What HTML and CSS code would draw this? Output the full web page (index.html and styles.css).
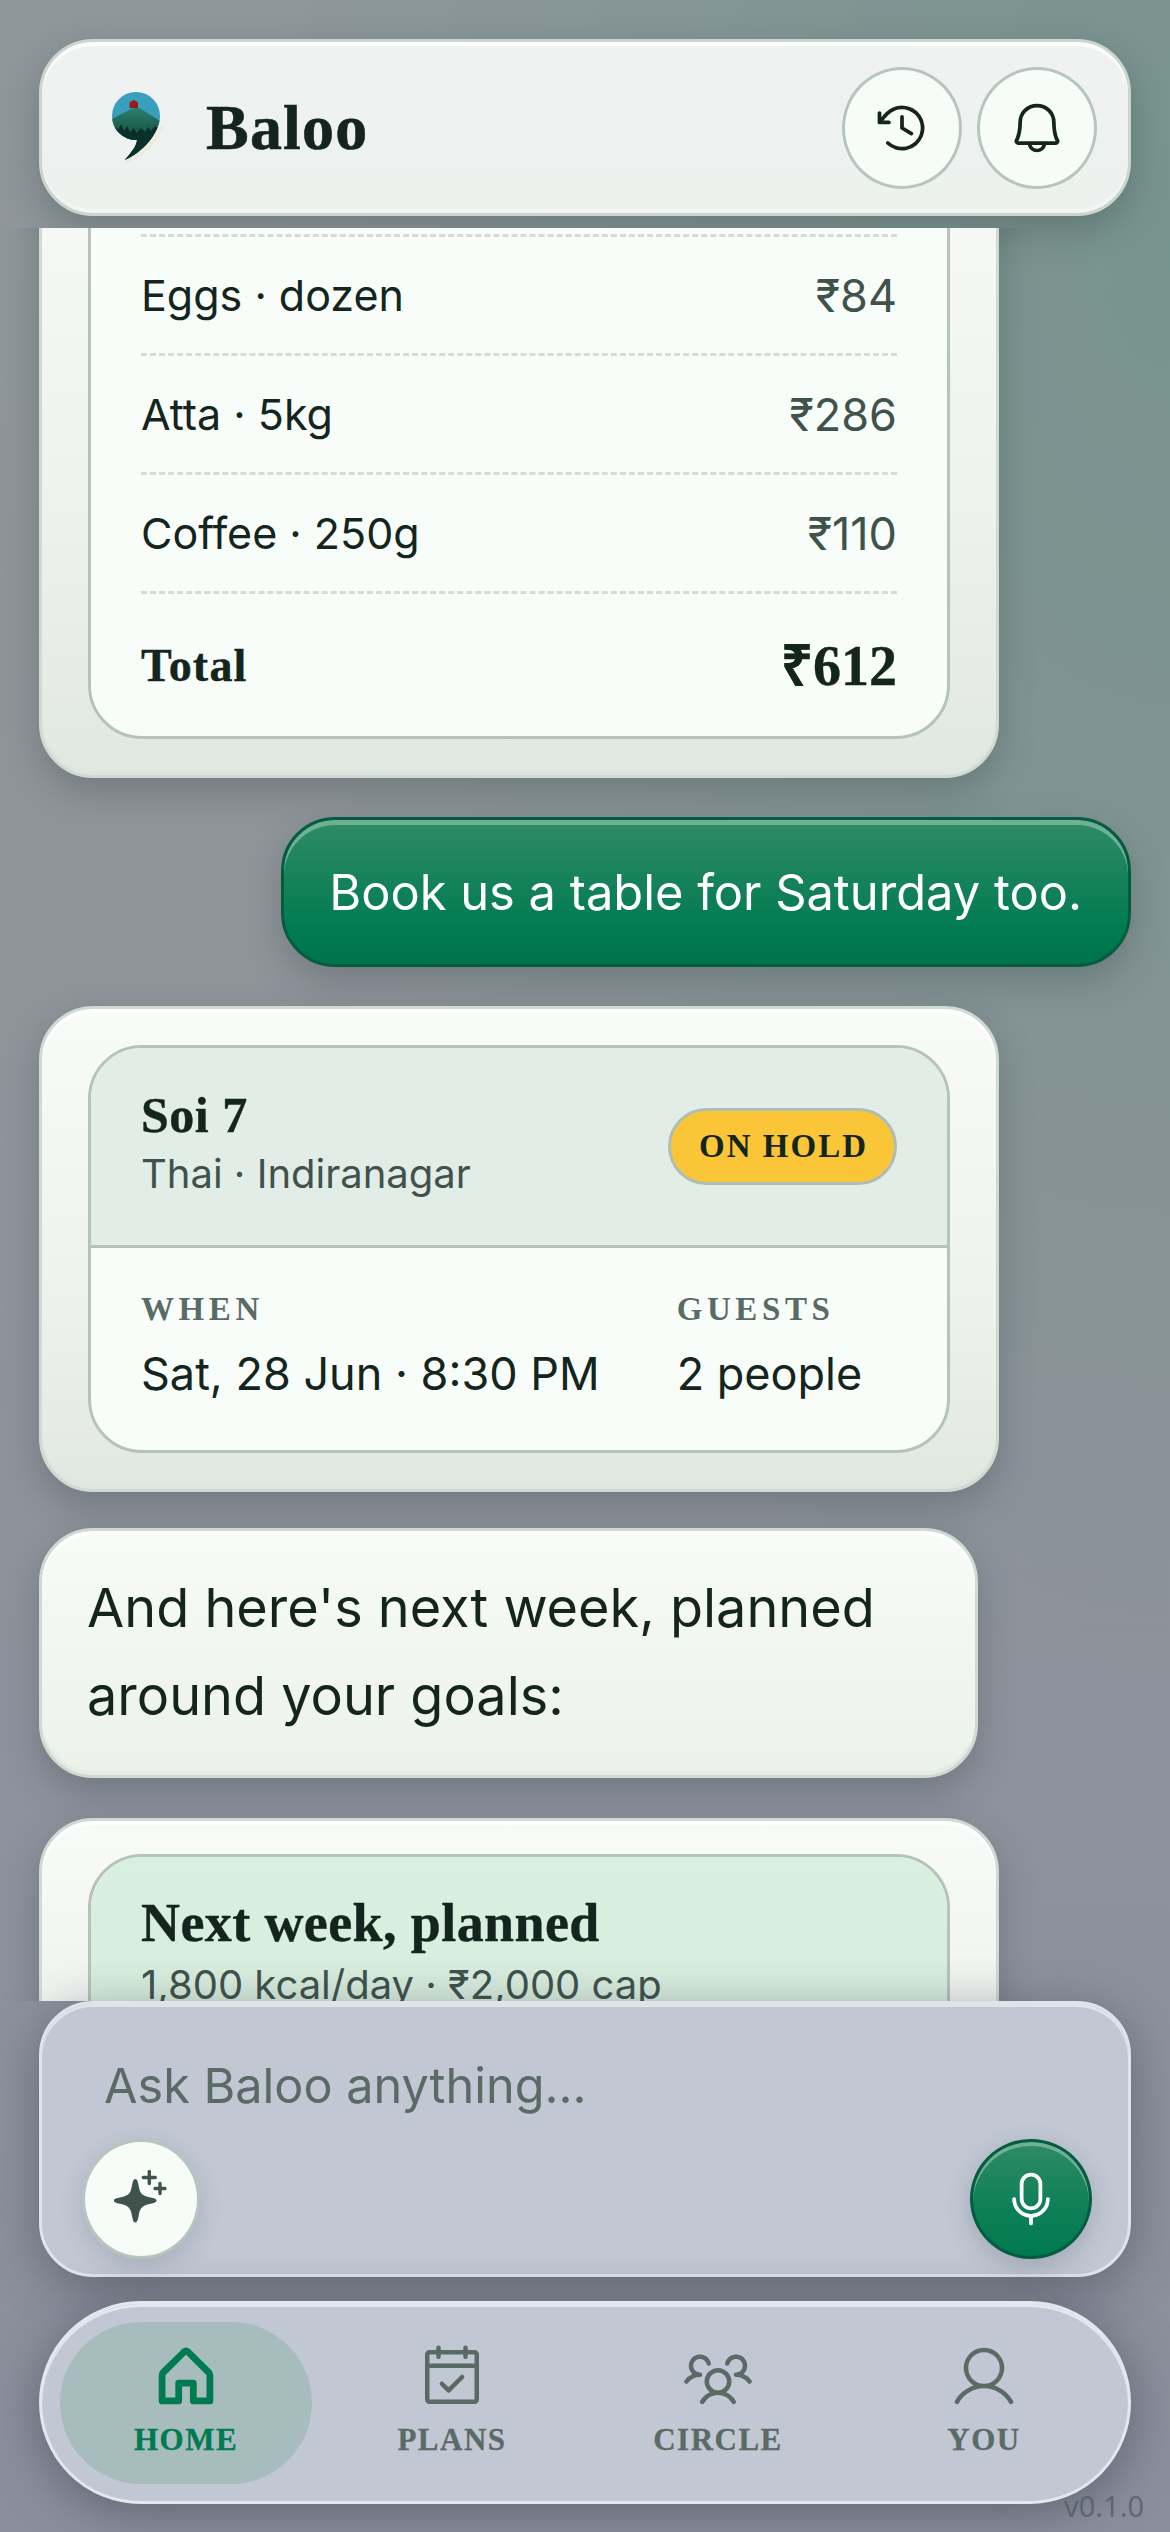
FILE: index.html
```html
<!DOCTYPE html>
<html lang="en">

<head>
    <meta charset="UTF-8" />
    <meta name="viewport" content="width=device-width, initial-scale=1.0" />
    <title>Baloo</title>
    <link rel="stylesheet" href="styles.css">
</head>

<body>
    <header class="topbar">
        <div class="brand">
            <svg class="logo" viewBox="0 0 60 76">
                <defs>
                    <clipPath id="commaClip">
                        <path d="M2 25A24 24 0 0 1 50 25C50 42 32 62 14.7 69C20 63 27 55 27 49A24 24 0 0 1 2 25Z" />
                    </clipPath>
                    <linearGradient id="hill" x1="0" y1="0" x2="0" y2="1">
                        <stop offset="0" stop-color="#2c7f6c" />
                        <stop offset="0.55" stop-color="#114c40" />
                        <stop offset="1" stop-color="#0b3029" />
                    </linearGradient>
                    <path id="logoArc" d="M17 72C32 67 50 50 56 30" />
                </defs>
                <g clip-path="url(#commaClip)">
                    <rect width="60" height="76" fill="#389fbc" />
                    <path d="M0 29L19 19L25 16.5L30 17.5L52 31V76H0Z" fill="url(#hill)" />
                    <path d="M2 40L6 36L8 39L11 33L14 40L17 35L20 41L24 37L27 42L31 37L35 41L38 36L41 40L45 35L50 38V56L14 72L2 48Z" fill="#0b3029" />
                </g>
                <path d="M19.5 11.5L23.6 8.8L28 11.5V17H19.5Z" fill="#9a1b1f" />
                <text class="logo-tag"><textPath href="#logoArc">NO BARE NECESSITIES</textPath></text>
            </svg>
            <span class="brand-name">Baloo</span>
        </div>
        <div class="top-actions">
            <button class="round-btn" type="button">
                <svg class="icon-60" viewBox="0 0 256 256"><path d="M136,80v43.47l36.12,21.67a8,8,0,0,1-8.24,13.72l-40-24A8,8,0,0,1,120,128V80a8,8,0,0,1,16,0Zm-8-48A95.44,95.44,0,0,0,60.08,60.15C52.81,67.51,46.35,74.59,40,82V64a8,8,0,0,0-16,0v40a8,8,0,0,0,8,8H72a8,8,0,0,0,0-16H49c7.15-8.42,14.27-16.35,22.39-24.57a80,80,0,1,1,1.66,114.75,8,8,0,1,0-11,11.64A96,96,0,1,0,128,32Z" /></svg>
            </button>
            <button class="round-btn" type="button">
                <svg class="icon-60" viewBox="0 0 256 256"><path d="M221.8,175.94C216.25,166.38,208,139.33,208,104a80,80,0,1,0-160,0c0,35.34-8.26,62.38-13.81,71.94A16,16,0,0,0,48,200H88.81a40,40,0,0,0,78.38,0H208a16,16,0,0,0,13.8-24.06ZM128,216a24,24,0,0,1-22.62-16h45.24A24,24,0,0,1,128,216ZM48,184c7.7-13.24,16-43.92,16-80a64,64,0,1,1,128,0c0,36.05,8.28,66.73,16,80Z" /></svg>
            </button>
        </div>
    </header>

    <main class="chat">
        <div class="feed">
            <section class="card-shell">
                <div class="card-inner">
                    <div class="bill">
                        <div class="bill-row"><span>Eggs · dozen</span><span class="price">₹84</span></div>
                        <div class="bill-row"><span>Atta · 5kg</span><span class="price">₹286</span></div>
                        <div class="bill-row"><span>Coffee · 250g</span><span class="price">₹110</span></div>
                        <div class="bill-total"><span>Total</span><span class="total-price">₹612</span></div>
                    </div>
                </div>
            </section>

            <div class="bubble-user">Book us a table for Saturday too.</div>

            <section class="card-shell">
                <div class="card-inner">
                    <div class="booking-head">
                        <div>
                            <div class="booking-name">Soi 7</div>
                            <div class="booking-sub">Thai · Indiranagar</div>
                        </div>
                        <span class="badge">ON HOLD</span>
                    </div>
                    <div class="booking-body">
                        <div>
                            <div class="field-label">WHEN</div>
                            <div class="field-value">Sat, 28 Jun · 8:30 PM</div>
                        </div>
                        <div>
                            <div class="field-label">GUESTS</div>
                            <div class="field-value">2 people</div>
                        </div>
                    </div>
                </div>
            </section>

            <div class="bubble-bot">And here's next week, planned around your goals:</div>

            <section class="card-shell card-plan">
                <div class="card-inner">
                    <div class="plan-head">
                        <div class="plan-title">Next week, planned</div>
                        <div class="plan-sub">1,800 kcal/day · ₹2,000 cap</div>
                    </div>
                </div>
            </section>
        </div>
    </main>

    <section class="composer">
        <div class="placeholder">Ask Baloo anything...</div>
        <div class="composer-row">
            <button class="spark-btn" type="button">
                <svg class="icon-60" viewBox="0 0 60 60">
                    <path class="spark-fill" d="M24.3 10C26.3 10 27 13 27.8 17.5C29 25 31.5 27.2 42 29C46.8 30 46.8 33.2 42 34.2C31.5 36 29 38.5 27.8 46C27 50.5 26.3 53.5 24.3 53.5C22.3 53.5 21.6 50.5 20.8 46C19.6 38.5 17 36 6.5 34.2C1.7 33.2 1.7 30 6.5 29C17 27.2 19.6 25 20.8 17.5C21.6 13 22.3 10 24.3 10Z" />
                    <path class="spark-line" d="M38.3 2.5V14.5M32.3 8.5H44.3M49 14.5V24.5M44 19.5H54" />
                </svg>
            </button>
            <button class="mic-btn" type="button">
                <svg class="icon-60" viewBox="0 0 256 256"><path d="M128,176a48.05,48.05,0,0,0,48-48V64a48,48,0,0,0-96,0v64A48.05,48.05,0,0,0,128,176ZM96,64a32,32,0,0,1,64,0v64a32,32,0,0,1-64,0Zm40,143.6V232a8,8,0,0,1-16,0V207.6A80.11,80.11,0,0,1,48,128a8,8,0,0,1,16,0,64,64,0,0,0,128,0,8,8,0,0,1,16,0A80.11,80.11,0,0,1,136,207.6Z" /></svg>
            </button>
        </div>
    </section>

    <nav class="tabbar">
        <a class="tab tab-active">
            <svg class="icon-72" viewBox="0 0 256 256"><path class="house" d="M43 213V122Q43 116 47 112L122 38Q128 33 134 38L209 112Q213 116 213 122V213H154V150H102V213Z" /></svg>
            <span>HOME</span>
        </a>
        <a class="tab">
            <svg class="icon-72" viewBox="0 0 256 256"><path d="M208,32H184V24a8,8,0,0,0-16,0v8H88V24a8,8,0,0,0-16,0v8H48A16,16,0,0,0,32,48V208a16,16,0,0,0,16,16H208a16,16,0,0,0,16-16V48A16,16,0,0,0,208,32ZM72,48v8a8,8,0,0,0,16,0V48h80v8a8,8,0,0,0,16,0V48h24V80H48V48ZM208,208H48V96H208V208Zm-38.34-85.66a8,8,0,0,1,0,11.32l-48,48a8,8,0,0,1-11.32,0l-24-24a8,8,0,0,1,11.32-11.32L116,164.69l42.34-42.35A8,8,0,0,1,169.66,122.34Z" /></svg>
            <span>PLANS</span>
        </a>
        <a class="tab">
            <svg class="icon-72" viewBox="0 0 256 256"><path d="M244.8,150.4a8,8,0,0,1-11.2-1.6A51.6,51.6,0,0,0,192,128a8,8,0,0,1-7.37-4.89,8,8,0,0,1,0-6.22A8,8,0,0,1,192,112a24,24,0,1,0-23.24-30,8,8,0,1,1-15.5-4A40,40,0,1,1,219,117.51a67.94,67.94,0,0,1,27.43,21.68A8,8,0,0,1,244.8,150.4ZM190.92,212a8,8,0,1,1-13.84,8,57,57,0,0,0-98.16,0,8,8,0,1,1-13.84-8,72.06,72.06,0,0,1,33.74-29.92,48,48,0,1,1,58.36,0A72.06,72.06,0,0,1,190.92,212ZM128,176a32,32,0,1,0-32-32A32,32,0,0,0,128,176ZM72,120a8,8,0,0,0-8-8A24,24,0,1,1,87.24,82a8,8,0,1,0,15.5-4A40,40,0,1,0,37,117.51,67.94,67.94,0,0,0,9.6,139.19a8,8,0,1,0,12.8,9.61A51.6,51.6,0,0,1,64,128,8,8,0,0,0,72,120Z" /></svg>
            <span>CIRCLE</span>
        </a>
        <a class="tab">
            <svg class="icon-72" viewBox="0 0 256 256"><path d="M230.92,212c-15.23-26.33-38.7-45.21-66.09-54.16a72,72,0,1,0-73.66,0C63.78,166.78,40.31,185.66,25.08,212a8,8,0,1,0,13.85,8c18.84-32.56,52.14-52,89.07-52s70.23,19.44,89.07,52a8,8,0,1,0,13.85-8ZM72,96a56,56,0,1,1,56,56A56.06,56.06,0,0,1,72,96Z" /></svg>
            <span>YOU</span>
        </a>
    </nav>

    <div class="version">v0.1.0</div>
</body>

</html>
```

FILE: styles.css
```css
* {
    box-sizing: border-box;
}

html,
body {
    height: 2532px;
    margin: 0;
}

body {
    position: relative;
    display: flex;
    flex-direction: column;
    overflow: hidden;
    padding: 39px 0 28px;
    font-family: Inter, sans-serif;
    color: #14251e;
    background:
        radial-gradient(900px 1500px at 100% 10%, rgba(112, 146, 138, 0.75), rgba(112, 146, 138, 0) 100%),
        linear-gradient(180deg, #8e979a 0%, #8f949b 45%, #8b8f9d 100%);
}

button {
    padding: 0;
    font: inherit;
    cursor: pointer;
}

.icon-60 {
    display: block;
    width: 60px;
    height: 60px;
}

.icon-72 {
    display: block;
    width: 72px;
    height: 72px;
    fill: currentColor;
}

/* top bar */
.topbar {
    display: flex;
    flex: none;
    align-items: center;
    justify-content: space-between;
    height: 177px;
    margin: 0 39px;
    padding: 0 31px 0 68px;
    border: 3px solid #c9d5cf;
    border-radius: 54px;
    background: linear-gradient(180deg, #eff2f1, #edf1ee);
    box-shadow: inset 0 4px 0 #fbfdfc, inset 0 -4px 0 #f2f5f3, 0 14px 36px rgba(35, 55, 50, 0.28);
}

.brand {
    display: flex;
    align-items: center;
    gap: 36px;
}

.logo {
    display: block;
    width: 60px;
    height: 76px;
    margin-top: 3px;
}

.logo-tag {
    font-family: "Liberation Sans", sans-serif;
    font-size: 4.6px;
    font-weight: 700;
    fill: #f3e3c4;
}

.brand-name {
    font-family: "Liberation Serif", serif;
    font-size: 64px;
    font-weight: 700;
    letter-spacing: 1.2px;
    color: #14251e;
    -webkit-text-stroke: 0.6px currentColor;
}

.top-actions {
    display: flex;
    gap: 15px;
}

.round-btn {
    display: flex;
    align-items: center;
    justify-content: center;
    width: 120px;
    height: 122px;
    border: 3px solid #b8c5bf;
    border-radius: 50%;
    background: #f8fcf9;
    fill: #14251e;
}

/* scrolling chat */
.chat {
    flex: 1;
    min-height: 0;
    margin-top: 12px;
    overflow: hidden;
}

.feed {
    display: flex;
    flex-direction: column;
    align-items: flex-start;
    gap: 39px;
    margin-top: -124px;
    padding: 0 39px;
}

.card-shell {
    flex: none;
    width: 960px;
    padding: 36px 46px;
    border: 3px solid #cfdad3;
    border-radius: 54px;
    background: linear-gradient(180deg, #f8fbf8, #eef2ee 60%, #e1e7e1);
    box-shadow: inset 0 4px 0 #fff, inset 0 -4px 0 #dfe5df, 0 14px 36px rgba(35, 50, 50, 0.26);
}

.card-inner {
    overflow: hidden;
    border: 3px solid #b5c3bc;
    border-radius: 54px;
    background: #f8fdf9;
}

.bill {
    padding: 88px 50px 0;
}

.bill-row {
    display: flex;
    align-items: center;
    justify-content: space-between;
    height: 119px;
    border-top: 3px dashed #d3dcd7;
    font-size: 43px;
}

.price {
    color: #3f524b;
    font-size: 45px;
}

.bill-total {
    display: flex;
    align-items: center;
    justify-content: space-between;
    height: 145px;
    border-top: 3px dashed #d3dcd7;
    font-family: "Liberation Serif", serif;
    font-size: 46px;
    font-weight: 700;
    letter-spacing: 1.2px;
    -webkit-text-stroke: 0.4px currentColor;
}

.total-price {
    margin-top: -4px;
    font-size: 56px;
    letter-spacing: 0;
}

.bubble-user {
    flex: none;
    align-self: flex-end;
    display: flex;
    align-items: center;
    height: 150px;
    padding: 0 46px 0 45px;
    border: 3px solid #055c40;
    border-radius: 54px;
    color: #fff;
    font-size: 48.8px;
    background: linear-gradient(180deg, #2f8b66, #0d7f57 55%, #007a50 80%, #00734b);
    box-shadow: inset 0 5px 0 #6fb094, 0 14px 36px rgba(35, 50, 50, 0.26);
}

.booking-head {
    display: flex;
    align-items: center;
    justify-content: space-between;
    height: 200px;
    padding: 0 50px;
    border-bottom: 3px solid #b5c3bc;
    background: #e3ede7;
}

.booking-name {
    margin-top: -8px;
    font-family: "Liberation Serif", serif;
    font-size: 50px;
    font-weight: 700;
    line-height: 60px;
    letter-spacing: 0.5px;
    -webkit-text-stroke: 0.4px currentColor;
}

.booking-sub {
    margin-top: 3px;
    color: #3f524b;
    font-size: 40px;
    line-height: 52px;
}

.badge {
    display: flex;
    align-items: center;
    height: 77px;
    padding: 0 26px 0 28px;
    border: 3px solid #b0bdb5;
    border-radius: 39px;
    font-family: "Liberation Serif", serif;
    font-size: 33px;
    font-weight: 700;
    letter-spacing: 2px;
    background: #fac637;
}

.booking-body {
    display: flex;
    gap: 77px;
    height: 202px;
    padding: 41px 50px 0;
}

.field-label {
    font-family: "Liberation Serif", serif;
    font-size: 33px;
    font-weight: 700;
    line-height: 40px;
    letter-spacing: 4.6px;
    color: #5a6b66;
}

.field-value {
    margin-top: 18px;
    font-size: 45px;
    line-height: 54px;
}

.bubble-bot {
    flex: none;
    width: 939px;
    margin-top: -3px;
    padding: 33px 45px 35px;
    border: 3px solid #cfdad3;
    border-radius: 54px;
    font-size: 54px;
    line-height: 88px;
    background: linear-gradient(180deg, #f8fbf8, #ecf1ec);
    box-shadow: inset 0 4px 0 #fff, inset 0 -4px 0 #e6ebe6, 0 14px 36px rgba(35, 50, 50, 0.26);
}

.card-plan {
    margin-top: 1px;
    padding-top: 33px;
}

.plan-head {
    height: 300px;
    padding: 33px 50px 0;
    background: linear-gradient(180deg, #d9efdf, #d6ecdc);
}

.plan-title {
    font-family: "Liberation Serif", serif;
    font-size: 54px;
    font-weight: 700;
    line-height: 66px;
    letter-spacing: 0.4px;
    -webkit-text-stroke: 0.4px currentColor;
}

.plan-sub {
    margin-top: 1px;
    color: #3f524b;
    font-size: 40px;
    line-height: 56px;
}

/* composer and tabs */
.composer {
    position: relative;
    z-index: 2;
    flex: none;
    height: 276px;
    margin: 0 39px;
    padding: 0 36px 12px;
    border: 3px solid #dfe3ea;
    border-radius: 54px;
    background: #c1c7d3;
    box-shadow: inset 0 3px 0 #dfe3ea, 0 10px 50px rgba(50, 58, 72, 0.45);
}

.placeholder {
    height: 135px;
    padding: 53px 0 0 26px;
    font-size: 48.6px;
    line-height: 58px;
    color: #5a6b66;
}

.composer-row {
    display: flex;
    align-items: center;
    justify-content: space-between;
}

.spark-btn {
    display: flex;
    align-items: center;
    justify-content: center;
    width: 118px;
    height: 120px;
    margin-left: 4px;
    border: 3px solid #b5c6bd;
    border-radius: 50%;
    background: #f8fcf9;
    box-shadow: 0 8px 24px rgba(70, 80, 95, 0.18);
}

.spark-fill {
    fill: #3f524b;
}

.spark-line {
    fill: none;
    stroke: #3f524b;
    stroke-width: 3.4;
    stroke-linecap: round;
}

.mic-btn {
    display: flex;
    align-items: center;
    justify-content: center;
    width: 122px;
    height: 120px;
    border: 3px solid #055c40;
    border-radius: 50%;
    fill: #fff;
    background: linear-gradient(180deg, #2f8b66, #0d7f57 60%, #007a50);
    box-shadow: inset 0 4px 0 #6fb094, 0 8px 24px rgba(70, 80, 95, 0.25);
}

.tabbar {
    position: relative;
    z-index: 2;
    display: grid;
    flex: none;
    grid-template-columns: repeat(4, 252px);
    gap: 14px;
    height: 203px;
    margin: 24px 39px 0;
    padding: 18px;
    border: 3px solid #e4e7ed;
    border-radius: 102px;
    background: #c1c7d3;
    box-shadow: inset 0 3px 0 #e4e7ed, 0 8px 50px rgba(50, 58, 72, 0.5);
}

.tab {
    display: flex;
    flex-direction: column;
    align-items: center;
    height: 162px;
    padding-top: 19px;
    border-radius: 81px;
    color: #5a6b66;
    font-family: "Liberation Serif", serif;
    font-size: 31px;
    font-weight: 700;
    letter-spacing: 1.5px;
    -webkit-text-stroke: 0.3px currentColor;
}

.tab span {
    margin-top: 9px;
}

.tab-active {
    color: #007a50;
    background: #a7bdbd;
}

.house {
    fill: none;
    stroke: currentColor;
    stroke-width: 24;
    stroke-linejoin: round;
}

.version {
    position: absolute;
    right: 26px;
    bottom: 7px;
    z-index: 3;
    font-family: "Noto Sans", sans-serif;
    font-size: 29px;
    color: rgba(80, 92, 100, 0.75);
}
```
